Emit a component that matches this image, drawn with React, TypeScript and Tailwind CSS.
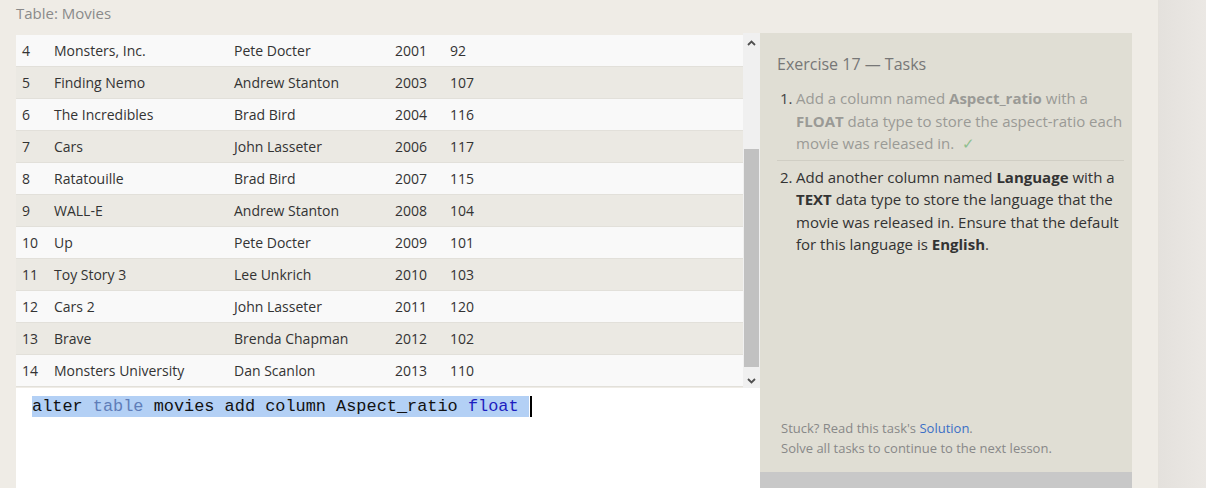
import React from "react";

const movies = [
  { id: 4, title: "Monsters, Inc.", director: "Pete Docter", year: 2001, length: 92 },
  { id: 5, title: "Finding Nemo", director: "Andrew Stanton", year: 2003, length: 107 },
  { id: 6, title: "The Incredibles", director: "Brad Bird", year: 2004, length: 116 },
  { id: 7, title: "Cars", director: "John Lasseter", year: 2006, length: 117 },
  { id: 8, title: "Ratatouille", director: "Brad Bird", year: 2007, length: 115 },
  { id: 9, title: "WALL-E", director: "Andrew Stanton", year: 2008, length: 104 },
  { id: 10, title: "Up", director: "Pete Docter", year: 2009, length: 101 },
  { id: 11, title: "Toy Story 3", director: "Lee Unkrich", year: 2010, length: 103 },
  { id: 12, title: "Cars 2", director: "John Lasseter", year: 2011, length: 120 },
  { id: 13, title: "Brave", director: "Brenda Chapman", year: 2012, length: 102 },
  { id: 14, title: "Monsters University", director: "Dan Scanlon", year: 2013, length: 110 },
];

const sans = { fontFamily: '"Open Sans", "Noto Sans", sans-serif' };

const Chevron = ({ up }: { up?: boolean }) => (
  <svg width="9" height="6" viewBox="0 0 9 6" className="block">
    {up ? (
      <path d="M1 5 L4.5 1.5 L8 5" fill="none" stroke="#505050" strokeWidth="1.8" />
    ) : (
      <path d="M1 1 L4.5 4.5 L8 1" fill="none" stroke="#505050" strokeWidth="1.8" />
    )}
  </svg>
);

export default function App() {
  return (
    <div className="flex h-[488px] w-[1206px] overflow-hidden bg-[#efece6]" style={sans}>
      <div className="flex w-[1158px] flex-col">
        {/* Heading */}
        <div className="h-[33px] pl-[16px] pt-[2px] text-[15px] text-[#8a8a8a]">Table: Movies</div>

        <div className="flex flex-1">
          {/* Table + editor */}
          <div className="ml-[16px] flex w-[744px] flex-col">
            <div className="flex h-[355px]">
              <div className="w-[727px] pt-[2px]">
                {movies.map((m, i) => (
                  <div
                    key={m.id}
                    className={`flex h-8 items-center border-b border-[#e2e0da] text-[14px] text-[#333] ${
                      i % 2 === 0 ? "bg-[#f9f9f9]" : "bg-[#ebe9e3]"
                    }`}
                  >
                    <span className="w-[38px] pl-[6px]">{m.id}</span>
                    <span className="w-[180px]">{m.title}</span>
                    <span className="w-[161px]">{m.director}</span>
                    <span className="w-[55px]">{m.year}</span>
                    <span>{m.length}</span>
                  </div>
                ))}
              </div>
              {/* Scrollbar */}
              <div className="flex w-[17px] flex-col items-center bg-[#f0f0f0]">
                <div className="flex h-[17px] items-center pt-[2px]">
                  <Chevron up />
                </div>
                <div className="mt-[99px] h-[218px] w-[15px] bg-[#c1c1c1]" />
                <div className="flex flex-1 items-end pb-[4px]">
                  <Chevron />
                </div>
              </div>
            </div>
            {/* Editor */}
            <div className="flex-1 bg-white pl-[16px] pt-[8px]">
              <div
                className="flex h-[21px] items-center text-[16.9px] leading-none"
                style={{ fontFamily: '"Liberation Mono", "Courier New", monospace' }}
              >
                <span className="inline-block whitespace-pre bg-[#b3d0f5] leading-[21px] text-[#111]">
                  {"alter "}
                  <span className="text-[#5f7db8]">table</span>
                  {" movies add column Aspect_ratio "}
                  <span className="text-[#1d1dc0]">float</span>
                  {"\u00a0"}
                </span>
                <span className="ml-[1px] h-[21px] w-[2px] bg-black" />
              </div>
            </div>
          </div>

          {/* Tasks panel */}
          <div className="flex w-[372px] flex-col">
            <div className="flex flex-1 flex-col bg-[#e0ded4] pl-[17px] pr-[8px]">
              <div className="pt-[19px] text-[16px] text-[#777]">Exercise 17 — Tasks</div>
              <ol className="mt-[11px] text-[15px] leading-[22.5px]">
                <li className="flex border-b border-[#d0cec4] pb-[5px] text-[#9a9a96]">
                  <span className="w-[19px] shrink-0 pl-[3px] text-[#444]">1.</span>
                  <span>
                    Add a column named <b>Aspect_ratio</b> with a <b>FLOAT</b> data type to store the
                    aspect-ratio each movie was released in.{" "}
                    <span className="ml-[4px] text-[#8fc08f]">✓</span>
                  </span>
                </li>
                <li className="flex pt-[5px] text-[#333]">
                  <span className="w-[19px] shrink-0 pl-[3px]">2.</span>
                  <span>
                    Add another column named <b>Language</b> with a <b>TEXT</b> data type to store the
                    language that the movie was released in. Ensure that the default for this language
                    is <b>English</b>.
                  </span>
                </li>
              </ol>
              <div className="mt-auto pb-[14px] pl-[4px] text-[13px] leading-[20px] text-[#888]">
                <div>
                  Stuck? Read this task's <span className="text-[#3b6fc6]">Solution</span>.
                </div>
                <div>Solve all tasks to continue to the next lesson.</div>
              </div>
            </div>
            <div className="h-[16px] bg-[#c8c8c8]" />
          </div>
        </div>
      </div>

      {/* Right strip */}
      <div className="flex-1 border-l border-[#e4e1db] bg-gradient-to-r from-[#e4e1dd] to-[#ebe8e4]" />
    </div>
  );
}
